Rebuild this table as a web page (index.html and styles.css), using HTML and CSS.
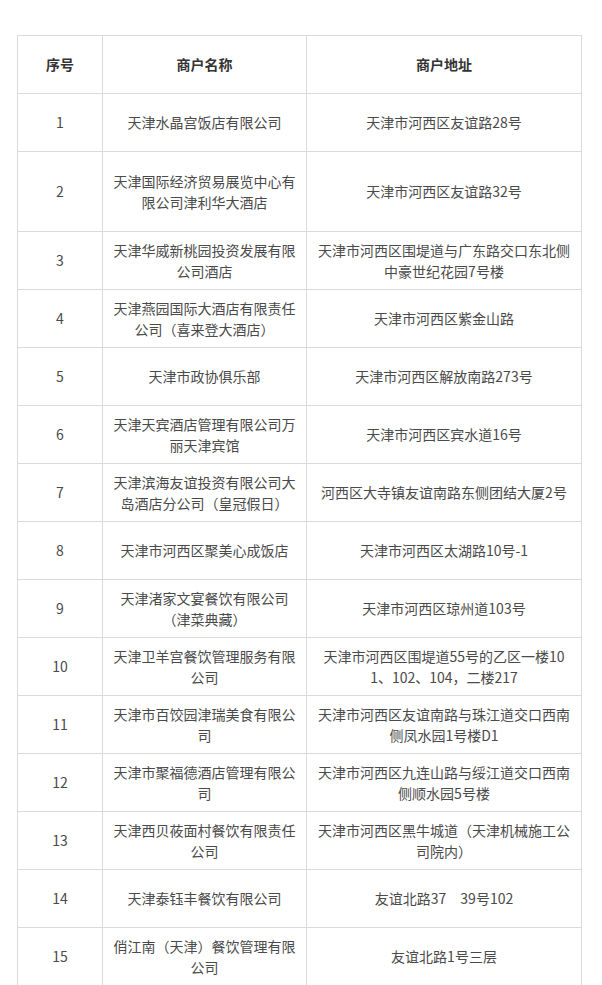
FILE: index.html
```html
<!DOCTYPE html>
<html lang="zh-CN">
<head>
<meta charset="utf-8">
<link rel="stylesheet" href="styles.css">
</head>
<body>
<div class="page">
<table class="list">
  <colgroup>
    <col class="c1"><col class="c2"><col class="c3">
  </colgroup>
  <thead>
    <tr><th>序号</th><th>商户名称</th><th>商户地址</th></tr>
  </thead>
  <tbody>
    <tr><td>1</td><td>天津水晶宫饭店有限公司</td><td>天津市河西区友谊路28号</td></tr>
    <tr class="tall"><td>2</td><td>天津国际经济贸易展览中心有限公司津利华大酒店</td><td>天津市河西区友谊路32号</td></tr>
    <tr><td>3</td><td>天津华威新桃园投资发展有限公司酒店</td><td>天津市河西区围堤道与广东路交口东北侧中豪世纪花园7号楼</td></tr>
    <tr><td>4</td><td>天津燕园国际大酒店有限责任公司（喜来登大酒店）</td><td>天津市河西区紫金山路</td></tr>
    <tr><td>5</td><td>天津市政协俱乐部</td><td>天津市河西区解放南路273号</td></tr>
    <tr><td>6</td><td>天津天宾酒店管理有限公司万丽天津宾馆</td><td>天津市河西区宾水道16号</td></tr>
    <tr><td>7</td><td>天津滨海友谊投资有限公司大岛酒店分公司（皇冠假日）</td><td>河西区大寺镇友谊南路东侧团结大厦2号</td></tr>
    <tr><td>8</td><td>天津市河西区聚美心成饭店</td><td>天津市河西区太湖路10号-1</td></tr>
    <tr><td>9</td><td>天津渚家文宴餐饮有限公司（津菜典藏）</td><td>天津市河西区琼州道103号</td></tr>
    <tr><td>10</td><td>天津卫羊宫餐饮管理服务有限公司</td><td>天津市河西区围堤道55号的乙区一楼101、102、104，二楼217</td></tr>
    <tr><td>11</td><td>天津市百饺园津瑞美食有限公司</td><td>天津市河西区友谊南路与珠江道交口西南侧凤水园1号楼D1</td></tr>
    <tr><td>12</td><td>天津市聚福德酒店管理有限公司</td><td>天津市河西区九连山路与绥江道交口西南侧顺水园5号楼</td></tr>
    <tr><td>13</td><td>天津西贝莜面村餐饮有限责任公司</td><td>天津市河西区黑牛城道（天津机械施工公司院内）</td></tr>
    <tr><td>14</td><td>天津泰钰丰餐饮有限公司</td><td>友谊北路37　39号102</td></tr>
    <tr><td>15</td><td>俏江南（天津）餐饮管理有限公司</td><td>友谊北路1号三层</td></tr>
  </tbody>
</table>
</div>
</body>
</html>
```

FILE: styles.css
```css
html, body {
  margin: 0;
  padding: 0;
  background: #ffffff;
}
body {
  font-family: "Noto Sans CJK SC", "Noto Sans", sans-serif;
  font-size: 14px;
  line-height: 21px;
  color: #4a4a4a;
}
.page {
  padding: 35px 0 0 17px;
}
.list {
  border-collapse: collapse;
  table-layout: fixed;
  width: 564px;
}
.c1 { width: 85px; }
.c2 { width: 204px; }
.c3 { width: 275px; }
.list th,
.list td {
  border: 1px solid #dadada;
  padding: 0 8px;
  text-align: center;
  vertical-align: middle;
  word-break: break-all;
}
.list th {
  font-weight: bold;
  color: #333333;
}
.list tr {
  height: 58px;
}
.list tr.tall {
  height: 80px;
}
```
